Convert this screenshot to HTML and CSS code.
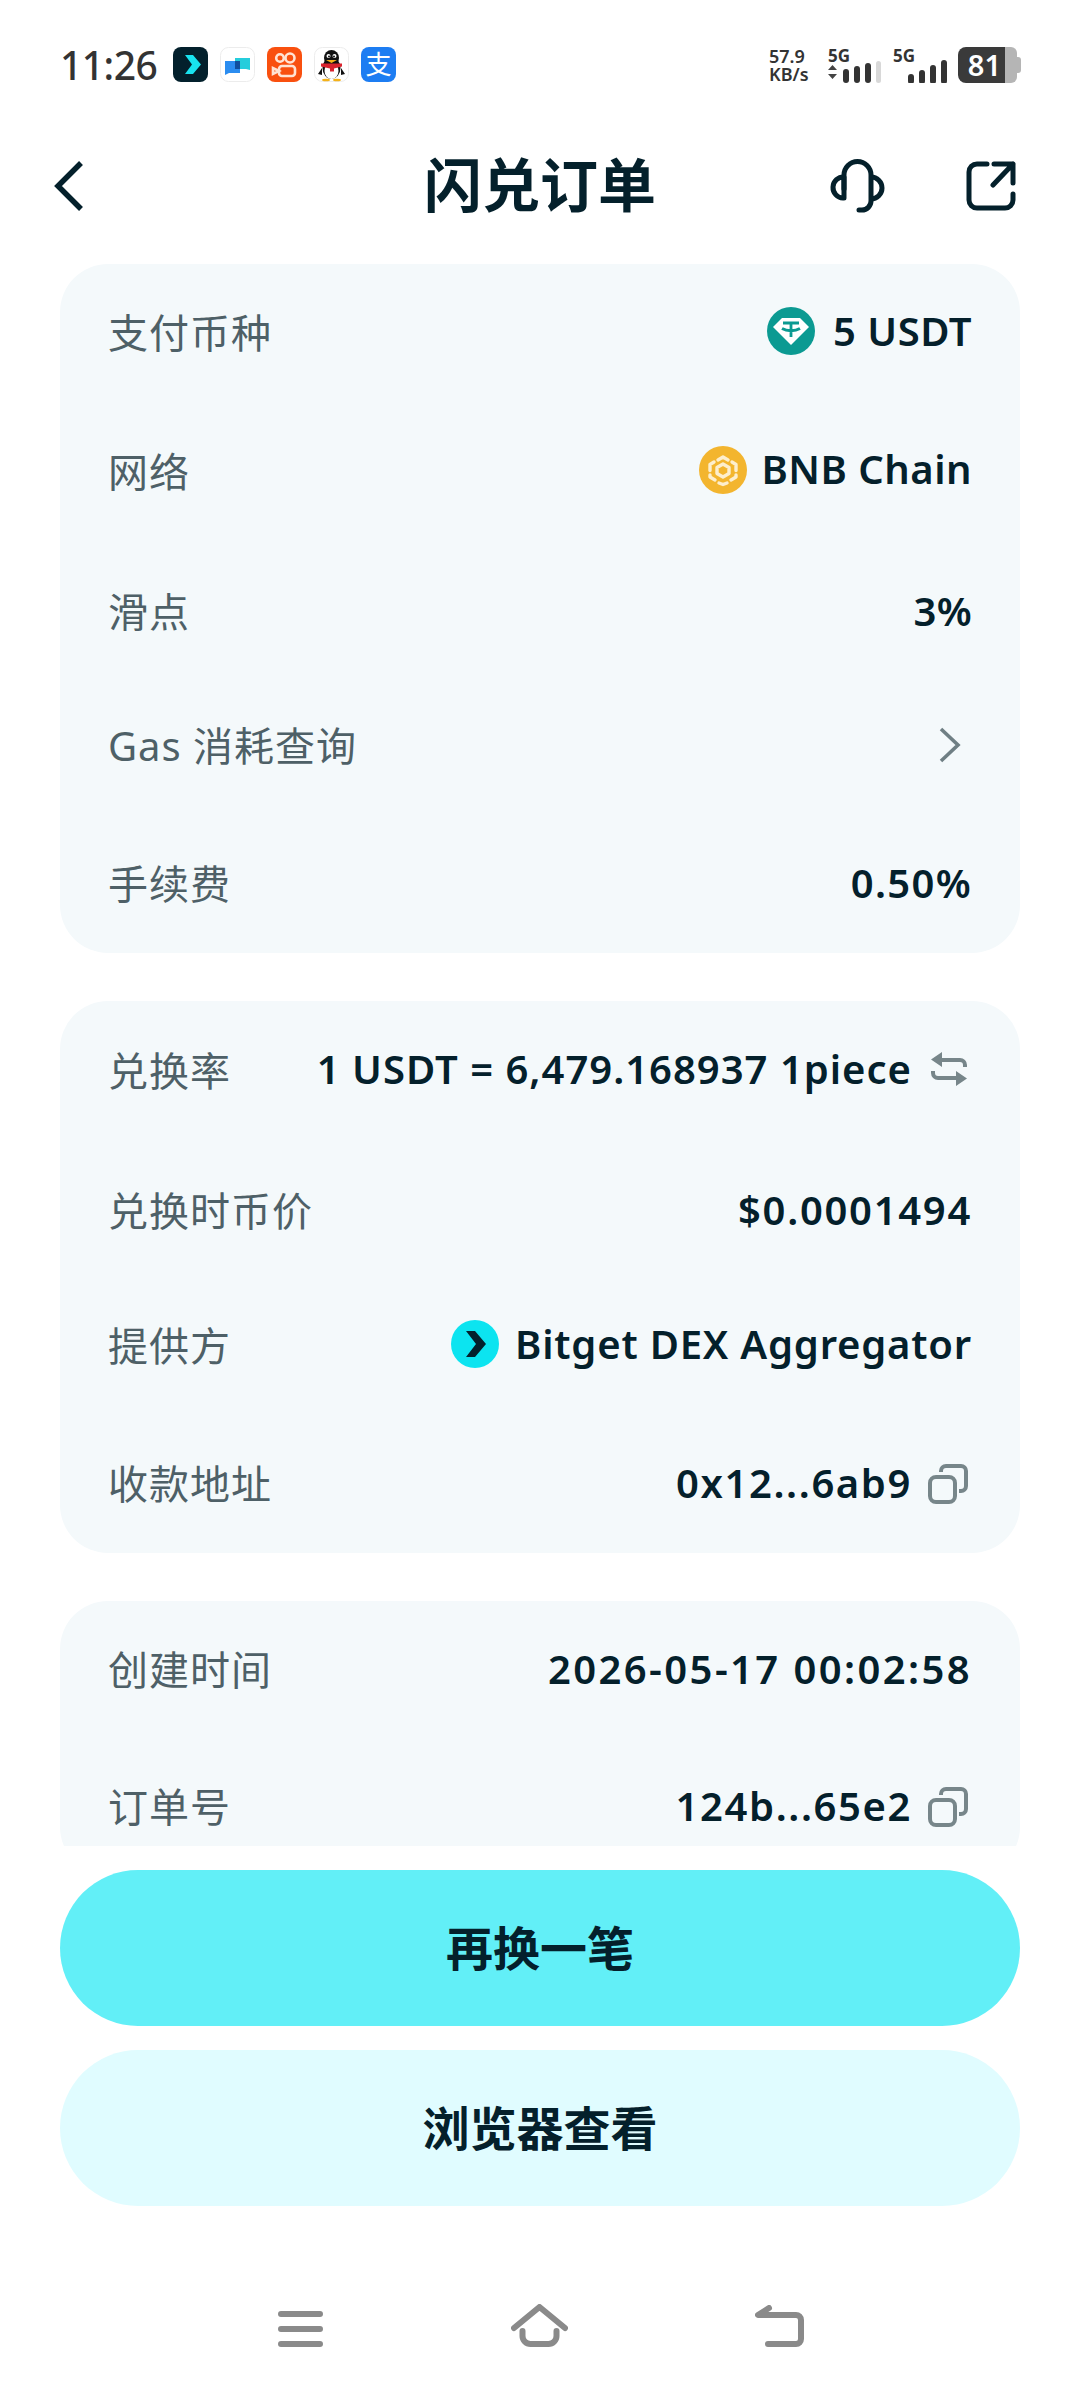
FILE: index.html
```html
<!DOCTYPE html>
<html lang="zh-CN">
<head>
<meta charset="utf-8">
<title>闪兑订单</title>
<link rel="stylesheet" href="styles.css">
</head>
<body>
<div class="app">
  <div class="status">
    <div class="time">11:26</div>
    <div class="apps">
      <svg class="app-ic" viewBox="0 0 35 35"><rect width="35" height="35" rx="8" fill="#03202c"/><path d="M12 8h8l8 9.500-8 9.500h-8l7-9.500z" fill="#18e3ef"/></svg>
      <svg class="app-ic" viewBox="0 0 35 35"><rect x=".5" y=".5" width="34" height="34" rx="8" fill="#fff" stroke="#ececec"/><path d="M15 11h15v12l-4-1H15z" fill="#25cddc"/><path d="M5 14h15v12H9l-4 2z" fill="#2b8df0"/><rect x="15" y="14" width="5" height="8" fill="#0f4f9e"/></svg>
      <svg class="app-ic" viewBox="0 0 35 35"><rect width="35" height="35" rx="8" fill="#f9500f"/><g fill="none" stroke="#ffe3d3" stroke-width="2.600"><circle cx="13" cy="11" r="3.800"/><circle cx="23" cy="11" r="4.500"/><rect x="12" y="19" width="16" height="10" rx="3"/><path d="M12 24l-6-3v6z"/></g></svg>
      <svg class="app-ic" viewBox="0 0 35 35"><rect x=".5" y=".5" width="34" height="34" rx="8" fill="#fff" stroke="#ececec"/><ellipse cx="17.500" cy="21" rx="9" ry="11" fill="#111"/><ellipse cx="17.500" cy="24" rx="7" ry="8" fill="#fff"/><ellipse cx="17.500" cy="11" rx="7.500" ry="8" fill="#111"/><circle cx="14.500" cy="9" r="2" fill="#fff"/><circle cx="20.500" cy="9" r="2" fill="#fff"/><circle cx="15" cy="9.500" r="1" fill="#111"/><circle cx="20" cy="9.500" r="1" fill="#111"/><path d="M12 13h11l-5.500 3z" fill="#f4b21a"/><path d="M7 16.500h21v3l-8 2v3h-4v-3l-9-2z" fill="#d9232e"/><path d="M8 21L4 27l4 1zM27 21l4 6-4 1z" fill="#111"/><ellipse cx="12" cy="33" rx="4" ry="1.300" fill="#f4b21a"/><ellipse cx="23" cy="33" rx="4" ry="1.300" fill="#f4b21a"/></svg>
      <div class="alipay">支</div>
    </div>
    <div class="sys">
      <div class="speed"><span>57.9</span><span>KB/s</span></div>
      <div class="sim sim-a">
        <span class="g5">5G</span>
        <svg class="bars" viewBox="0 0 53 22"><path d="M0 9l4.500-5 4.500 5zM0 13l4.500 5 4.500-5z" fill="#444"/><rect x="15" y="8" width="6" height="14" rx="3" fill="#333"/><rect x="26" y="5" width="6" height="17" rx="3" fill="#333"/><rect x="37" y="2" width="6" height="20" rx="3" fill="#333"/><rect x="48" y="0" width="5" height="22" rx="2.500" fill="#d8d8d8"/></svg>
      </div>
      <div class="sim sim-b">
        <span class="g5">5G</span>
        <svg class="bars" viewBox="0 0 39 22"><rect x="0" y="14" width="6" height="10" rx="3" fill="#333"/><rect x="11" y="10" width="6" height="14" rx="3" fill="#333"/><rect x="22" y="5" width="6" height="19" rx="3" fill="#333"/><rect x="33" y="0" width="6" height="24" rx="3" fill="#333"/></svg>
      </div>
      <div class="battery"><div class="bat-fill">81</div><div class="bat-rest"></div><div class="bat-nub"></div></div>
    </div>
  </div>

  <div class="header">
    <svg class="ic-back" viewBox="0 0 30 52"><path d="M27 3L4 26l23 23" fill="none" stroke="#04202b" stroke-width="5.500"/></svg>
    <div class="title">闪兑订单</div>
    <div class="head-actions">
      <svg class="ic-head" viewBox="0 0 56 56"><path d="M14 31V17a13.500 13.500 0 0 1 27 0v26a9 9 0 0 1-9 9h-3" fill="none" stroke="#04202b" stroke-width="5" stroke-linecap="round"/><path d="M14 19a10.500 10.500 0 0 0-1 21h1zM41 19a11 11 0 0 1 0 22" fill="none" stroke="#04202b" stroke-width="5" stroke-linejoin="round"/></svg>
      <svg class="ic-share" viewBox="0 0 50 50"><path d="M21 3H11a8 8 0 0 0-8 8v28a8 8 0 0 0 8 8h28a8 8 0 0 0 8-8V33" fill="none" stroke="#04202b" stroke-width="5" stroke-linecap="round"/><path d="M28 3h19v19M47 3L27 24" fill="none" stroke="#04202b" stroke-width="5" stroke-linecap="round" stroke-linejoin="round"/></svg>
    </div>
  </div>

  <div class="scroll">
    <div class="card">
      <div class="row r1a">
        <span class="label">支付币种</span>
        <span class="value ls-5">
          <svg class="coin coin-wide" viewBox="0 0 48 48"><circle cx="24" cy="24" r="24" fill="#0b9a92"/><path d="M15 11h18l9 9-18 18L6 20z" fill="#fff"/><path d="M16 16h16M24 16v14M15 21.500c5 3 13 3 18 0" fill="none" stroke="#0b9a92" stroke-width="2.800"/></svg>
          <span>5 USDT</span>
        </span>
      </div>
      <div class="row r1b">
        <span class="label">网络</span>
        <span class="value ls-5">
          <svg class="coin coin-bnb" viewBox="0 0 48 48"><circle cx="24" cy="24" r="24" fill="#f3b52e"/><g fill="none" stroke="#fdeecd" stroke-width="3.400" stroke-linejoin="round" stroke-linecap="round"><path d="M19 14l5-3 5 3M33 16l4 2.500v6M37 29v2l-5 3M28 37l-4 1.500L20 37M16 34l-5-3v-2M11 24.500v-6l4-2.500"/><path d="M24 18l6 3.500v6L24 31l-6-3.500v-6z"/></g></svg>
          <span class="lift">BNB Chain</span>
        </span>
      </div>
      <div class="row r1c"><span class="label">滑点</span><span class="value ls-3">3%</span></div>
      <div class="row r1d">
        <span class="label">Gas 消耗查询</span>
        <svg class="ic-chev" viewBox="0 0 24 38"><path d="M3 3l17 16L3 35" fill="none" stroke="#6f7f84" stroke-width="3.600"/></svg>
      </div>
      <div class="row r1e"><span class="label">手续费</span><span class="value ls-13">0.50%</span></div>
    </div>

    <div class="card">
      <div class="row r2a">
        <span class="label">兑换率</span>
        <span class="value ls-10"><span>1 USDT = 6,479.168937 1piece</span>
          <svg class="ic-swap" viewBox="0 0 38 36"><path d="M10 9h20a5 5 0 0 1 5 5v2M28 27H8a5 5 0 0 1-5-5v-2" fill="none" stroke="#77868a" stroke-width="4"/><path d="M12 1v15L1 8.500zM26 20v15l11-7.500z" fill="#77868a"/></svg>
        </span>
      </div>
      <div class="row r2b"><span class="label">兑换时币价</span><span class="value ls-17">$0.0001494</span></div>
      <div class="row r2c">
        <span class="label">提供方</span>
        <span class="value ls-8">
          <svg class="coin" viewBox="0 0 48 48"><circle cx="24" cy="24" r="24" fill="#0ce4f0"/><path d="M15 11h9l11 13-11 13h-9l10-13z" fill="#03202c"/></svg>
          <span>Bitget DEX Aggregator</span>
        </span>
      </div>
      <div class="row r2d">
        <span class="label">收款地址</span>
        <span class="value ls-15"><span>0x12...6ab9</span>
          <svg class="ic-copy" viewBox="0 0 40 40"><rect x="2" y="13" width="25" height="25" rx="6" fill="none" stroke="#77868a" stroke-width="4"/><path d="M13 8V7a5 5 0 0 1 5-5h15a5 5 0 0 1 5 5v15a5 5 0 0 1-5 5h-2" fill="none" stroke="#77868a" stroke-width="4"/></svg>
        </span>
      </div>
    </div>

    <div class="card">
      <div class="row r3a"><span class="label">创建时间</span><span class="value ls-24">2026-05-17 00:02:58</span></div>
      <div class="row r3b">
        <span class="label">订单号</span>
        <span class="value ls-15"><span>124b...65e2</span>
          <svg class="ic-copy" viewBox="0 0 40 40"><rect x="2" y="13" width="25" height="25" rx="6" fill="none" stroke="#77868a" stroke-width="4"/><path d="M13 8V7a5 5 0 0 1 5-5h15a5 5 0 0 1 5 5v15a5 5 0 0 1-5 5h-2" fill="none" stroke="#77868a" stroke-width="4"/></svg>
        </span>
      </div>
    </div>
  </div>

  <div class="actions">
    <button class="btn btn-primary">再换一笔</button>
    <button class="btn btn-soft">浏览器查看</button>
  </div>

  <div class="nav">
    <svg class="nav-menu" viewBox="0 0 45 36"><path d="M3 3h39M3 18h39M3 33h39" fill="none" stroke="#8a8a8a" stroke-width="6" stroke-linecap="round"/></svg>
    <svg class="nav-home" viewBox="0 0 57 43"><path d="M3 24L28.500 3 54 24" fill="none" stroke="#8a8a8a" stroke-width="6" stroke-linecap="round" stroke-linejoin="round"/><path d="M11.500 27v5a8 8 0 0 0 8 8h18a8 8 0 0 0 8-8v-5" fill="none" stroke="#8a8a8a" stroke-width="6" stroke-linecap="round"/></svg>
    <svg class="nav-ret" viewBox="0 0 49 42"><path d="M14 3L3 10h38a5 5 0 0 1 5 5v19a5 5 0 0 1-5 5H13" fill="none" stroke="#8a8a8a" stroke-width="6" stroke-linecap="round" stroke-linejoin="round"/></svg>
  </div>
</div>
</body>
</html>
```

FILE: styles.css
```css
* { box-sizing: border-box; }
html, body { margin: 0; padding: 0; background: #fff; }
body {
  font-family: "Noto Sans", "Noto Sans CJK SC", sans-serif;
  color: #04202b;
}
.app {
  width: 1080px;
  height: 2392px;
  display: flex;
  flex-direction: column;
  overflow: hidden;
}

/* status bar */
.status {
  height: 129px;
  padding: 47px 59px 0 60px;
  display: flex;
  align-items: flex-start;
}
.time {
  font-size: 39px;
  font-weight: 500;
  letter-spacing: -.5px;
  line-height: 36px;
  color: #333;
  width: 113px;
}
.apps { display: flex; gap: 12px; }
.app-ic { width: 35px; height: 35px; display: block; }
.alipay {
  width: 35px;
  height: 35px;
  border-radius: 8px;
  background: #1d7df2;
  color: #fff;
  font-size: 26px;
  line-height: 35px;
  text-align: center;
}
.sys { margin-left: auto; display: flex; align-items: flex-start; }
.speed {
  width: 59px;
  display: flex;
  flex-direction: column;
  font-size: 18px;
  font-weight: 600;
  line-height: 18px;
  color: #333;
}
.sim { position: relative; height: 36px; }
.sim-a { width: 54px; }
.sim-b { width: 54px; margin-left: 11px; }
.g5 {
  display: block;
  font-size: 17px;
  font-weight: 700;
  line-height: 18px;
  color: #333;
}
.sim-a .bars { width: 53px; height: 22px; position: absolute; left: 0; bottom: 0; }
.sim-b .bars { width: 39px; height: 24px; position: absolute; right: 0; bottom: 0; }
.battery { display: flex; align-items: center; height: 36px; margin-left: 11px; }
.bat-fill {
  width: 47px;
  height: 36px;
  background: #3a3a3a;
  border-radius: 8px 0 0 8px;
  color: #fff;
  font-size: 29px;
  font-weight: 600;
  line-height: 36px;
  text-align: right;
  padding-right: 4px;
}
.bat-rest { width: 12px; height: 36px; background: #b5b5b5; border-radius: 0 6px 6px 0; }
.bat-nub { width: 4px; height: 16px; background: #b5b5b5; border-radius: 0 3px 3px 0; }

/* header */
.header {
  height: 135px;
  padding: 0 64px 21px 54px;
  display: flex;
  align-items: center;
  justify-content: space-between;
  position: relative;
}
.ic-back { width: 30px; height: 52px; }
.title {
  position: absolute;
  left: 0;
  right: 0;
  top: 21px;
  text-align: center;
  font-size: 58px;
  font-weight: 700;
  line-height: 70px;
}
.head-actions { display: flex; gap: 80px; align-items: center; }
.ic-head { width: 56px; height: 56px; }
.ic-share { width: 50px; height: 50px; }

/* scroll area */
.scroll {
  flex: 1;
  min-height: 0;
  overflow: hidden;
  padding: 0 60px;
  display: flex;
  flex-direction: column;
  gap: 48px;
}
.card {
  flex: none;
  background: #f4f9fb;
  border-radius: 48px;
  padding: 0 48px;
}
.row {
  display: flex;
  align-items: center;
  justify-content: space-between;
}
.label {
  font-size: 40px;
  letter-spacing: 1px;
  color: #4e6067;
}
.value {
  display: flex;
  align-items: center;
  font-size: 40px;
  font-weight: 600;
  white-space: nowrap;
}
.ls-3 { letter-spacing: .3px; }
.ls-5 { letter-spacing: .5px; }
.ls-8 { letter-spacing: .8px; }
.ls-10 { letter-spacing: 1px; }
.ls-13 { letter-spacing: 1.300px; }
.ls-15 { letter-spacing: 1.600px; }
.ls-17 { letter-spacing: 1.700px; }
.ls-24 { letter-spacing: 2.400px; }
.lift { margin-bottom: 4px; }
.coin { width: 48px; height: 48px; margin-right: 16px; }
.coin-wide { margin-right: 18px; }
.coin-bnb { margin-right: 14px; }
.ic-chev { width: 24px; height: 38px; margin: 2px 10px 0 0; }
.ic-swap { width: 38px; height: 36px; margin-left: 18px; margin-right: 4px; }
.ic-copy { width: 40px; height: 40px; margin: 3px 4px 0 16px; }

.r1a { height: 133px; }
.r1b { height: 146px; }
.r1c { height: 134px; }
.r1d { height: 134px; }
.r1e { height: 142px; }
.r2a { height: 135px; }
.r2b { height: 143px; padding-top: 3px; }
.r2c { height: 132px; padding-bottom: 3px; }
.r2d { height: 142px; }
.r3a { height: 134px; }
.r3b { height: 140px; }

/* actions */
.actions {
  padding: 24px 60px 0;
  display: flex;
  flex-direction: column;
  gap: 24px;
}
.btn {
  height: 156px;
  border: 0;
  border-radius: 78px;
  padding: 0 0 5px;
  font-family: inherit;
  font-size: 47px;
  font-weight: 700;
  color: #04202b;
}
.btn-primary { background: #62eff7; }
.btn-soft { background: #e0fcff; }

/* nav */
.nav {
  height: 186px;
  position: relative;
}
.nav svg { position: absolute; }
.nav-menu { left: 278px; top: 105px; width: 45px; height: 36px; }
.nav-home { left: 511px; top: 98px; width: 57px; height: 43px; }
.nav-ret { left: 755px; top: 99px; width: 49px; height: 42px; }
```
